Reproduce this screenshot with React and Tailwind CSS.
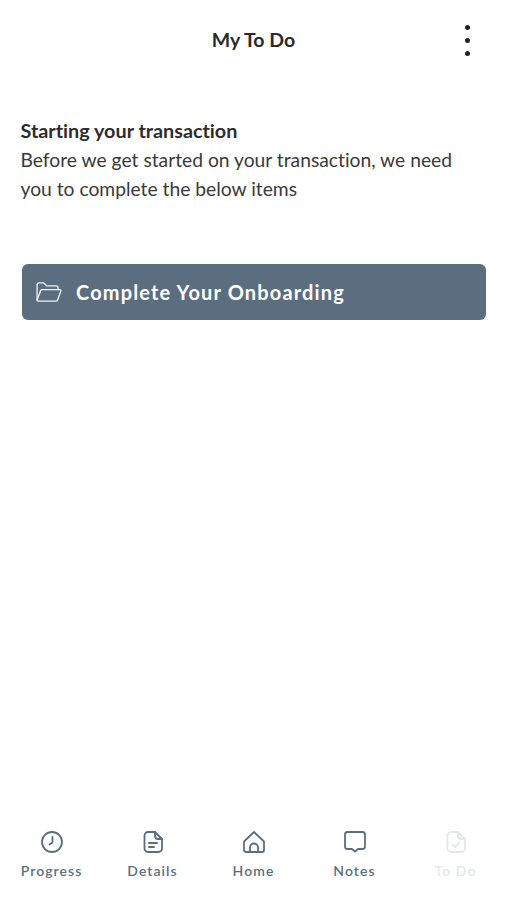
const tabs = [
  {
    label: "Progress",
    icon: (
      <>
        <circle cx="12" cy="12" r="10" />
        <path d="M12.5 7v5.5L9.5 14.5" />
      </>
    ),
  },
  {
    label: "Details",
    icon: (
      <>
        <path d="M7 2h7l7 7v9.500a3.500 3.500 0 0 1-3.500 3.500H7a3.500 3.500 0 0 1-3.500-3.500v-13A3.500 3.500 0 0 1 7 2z" />
        <path d="M14 2v4a3 3 0 0 0 3 3h4" />
        <path d="M8 13h8M8 17h5" />
      </>
    ),
  },
  {
    label: "Home",
    icon: (
      <>
        <path d="M2 11.500 12 2l10 9.500V20a2 2 0 0 1-2 2H4a2 2 0 0 1-2-2z" />
        <path d="M8 22v-4.500a4 4 0 0 1 8 0V22" />
      </>
    ),
  },
  {
    label: "Notes",
    icon: <path d="M4.500 2h15A2.500 2.500 0 0 1 22 4.500v12a2.500 2.500 0 0 1-2.500 2.500H15l-3 2.500L9 19H4.500A2.500 2.500 0 0 1 2 16.500v-12A2.500 2.500 0 0 1 4.500 2z" />,
  },
  {
    label: "To Do",
    muted: true,
    icon: (
      <>
        <path d="M7 2h7l7 7v9.500a3.500 3.500 0 0 1-3.500 3.500H7a3.500 3.500 0 0 1-3.500-3.500v-13A3.500 3.500 0 0 1 7 2z" />
        <path d="M14 2v4a3 3 0 0 0 3 3h4" />
        <path d="m8.500 14.500 2.500 2.500 4.500-4.500" />
      </>
    ),
  },
];

function Tab({ label, icon, muted }) {
  return (
    <div className={`flex w-[101px] flex-col items-center ${muted ? "text-[#e4e7ea]" : "text-[#5b6e7f]"}`}>
      <svg width="24" height="24" viewBox="0 0 24 24" fill="none" stroke="currentColor" strokeWidth="1.8" strokeLinecap="round" strokeLinejoin="round">
        {icon}
      </svg>
      <span className="mt-[7px] text-[14px] leading-[20px] font-semibold tracking-[1.05px]">{label}</span>
    </div>
  );
}

export default function App() {
  return (
    <div className="flex h-[900px] w-full flex-col bg-white font-['Lato','Liberation_Sans',sans-serif] text-[#2b2b2b] [font-variant-ligatures:none]">
      {/* Header */}
      <header className="relative flex h-[80px] shrink-0 items-center justify-center">
        <h1 className="text-[19.500px] font-bold text-[#2a2a2a]">My To Do</h1>
        <div className="absolute top-[25px] right-[37px] flex flex-col gap-[8px]">
          <span className="h-[5px] w-[5px] rounded-full bg-[#222]" />
          <span className="h-[5px] w-[5px] rounded-full bg-[#222]" />
          <span className="h-[5px] w-[5px] rounded-full bg-[#222]" />
        </div>
      </header>

      {/* Content */}
      <main className="flex-1 px-[20.500px] pt-[36px]">
        <p className="text-[19.800px] leading-[29px] font-bold text-[#2d2d2d]">Starting your transaction</p>
        <p className="text-[19.250px] leading-[29px] text-[#3a3a3a]">
          Before we get started on your transaction, we need you to complete the below items
        </p>
        <button className="mt-[61px] ml-[1.500px] flex h-[56px] w-[464px] items-center gap-[14px] rounded-[6px] bg-[#5b6e7f] pl-[14px] text-white">
          <svg width="26" height="20" viewBox="0 0 27 21" fill="none" stroke="#eef2f5" strokeWidth="1.4" strokeLinejoin="round" strokeLinecap="round">
            <path d="M1 19V3a2 2 0 0 1 2-2h5l3 3h10a2 2 0 0 1 2 2v2" />
            <path d="M1 19l4-10.500a1 1 0 0 1 1-.500h19a1 1 0 0 1 1 1.300L22.500 19a1.500 1.500 0 0 1-1.500 1H2a1 1 0 0 1-1-1z" />
          </svg>
          <span className="text-[20px] font-bold tracking-[1.15px]">Complete Your Onboarding</span>
        </button>
      </main>

      {/* Bottom tabs */}
      <nav className="flex h-[78px] shrink-0 justify-center pt-[8px]">
        {tabs.map((t) => (
          <Tab key={t.label} {...t} />
        ))}
      </nav>
    </div>
  );
}
